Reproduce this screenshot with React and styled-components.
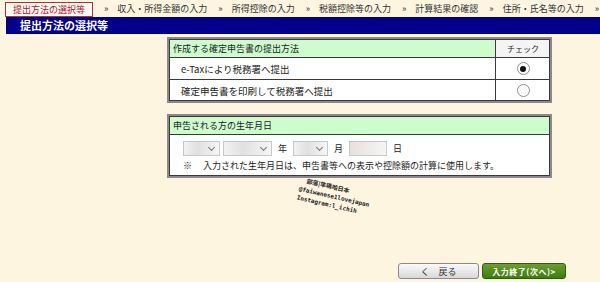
import React from "react";
import styled, { createGlobalStyle } from "styled-components";

const GlobalStyle = createGlobalStyle`
  html, body {
    margin: 0;
    padding: 0;
    background: #fdf5df;
  }
  body {
    font-family: "Noto Sans CJK JP", "Noto Sans", sans-serif;
    color: #222;
  }
`;

const steps = [
  "収入・所得金額の入力",
  "所得控除の入力",
  "税額控除等の入力",
  "計算結果の確認",
  "住所・氏名等の入力",
];

const App = () => {
  return (
    <Page>
      <GlobalStyle />
      <StepNav>
        <ActiveStep>提出方法の選択等</ActiveStep>
        {steps.map((s) => (
          <React.Fragment key={s}>
            <Sep>»</Sep>
            <Step>{s}</Step>
          </React.Fragment>
        ))}
        <Sep>»</Sep>
      </StepNav>
      <TitleBar>提出方法の選択等</TitleBar>

      <Content>
        <Table>
          <HeadRow>
            <Cell>作成する確定申告書の提出方法</Cell>
            <CheckCell head>チェック</CheckCell>
          </HeadRow>
          <Row>
            <Cell indent>e-Taxにより税務署へ提出</Cell>
            <CheckCell>
              <Radio checked />
            </CheckCell>
          </Row>
          <Row last>
            <Cell indent>確定申告書を印刷して税務署へ提出</Cell>
            <CheckCell>
              <Radio />
            </CheckCell>
          </Row>
        </Table>

        <Table>
          <HeadRow>
            <Cell>申告される方の生年月日</Cell>
          </HeadRow>
          <DateBlock>
            <DateLine>
              <Select width="37px" />
              <Select width="49px" />
              <Unit>年</Unit>
              <Select width="35px" />
              <Unit>月</Unit>
              <DayInput />
              <Unit>日</Unit>
            </DateLine>
            <Note>
              <span>※</span>
              入力された生年月日は、申告書等への表示や控除額の計算に使用します。
            </Note>
          </DateBlock>
        </Table>

        <Watermark>
          <div>部落|隼瑪哈日本</div>
          <div>@faiwanese1lovejapan</div>
          <div>Instagram:l_ichih</div>
        </Watermark>
      </Content>

      <Buttons>
        <BackButton>く　戻る</BackButton>
        <NextButton>入力終了(次へ)&gt;</NextButton>
      </Buttons>
    </Page>
  );
};

export default App;

const Page = styled.div`
  position: relative;
  width: 600px;
  height: 282px;
  overflow: hidden;
  background: #fdf5df;
`;

const StepNav = styled.div`
  display: flex;
  align-items: center;
  height: 17px;
  padding-left: 5px;
  font-size: 9px;
  white-space: nowrap;
`;

const ActiveStep = styled.div`
  border: 1px solid #b03040;
  background: #fffaf0;
  color: #b0102a;
  padding: 0 7px;
  height: 13px;
  line-height: 13px;
  margin-top: 1px;
`;

const Sep = styled.span`
  margin: 0 9px 0 11px;
  color: #333;
`;

const Step = styled.span`
  color: #333;
`;

const TitleBar = styled.div`
  margin-left: 6px;
  height: 17px;
  line-height: 17px;
  background: #00008c;
  color: #fff;
  font-weight: bold;
  font-size: 11px;
  padding-left: 14px;
`;

const Content = styled.div`
  position: relative;
  display: flex;
  flex-direction: column;
  gap: 11px;
  padding: 3px 0 0 167px;
`;

const Table = styled.div`
  width: 381px;
  border: 2px solid #8a8a8a;
  outline: 1px solid #3a3a3a;
  outline-offset: -3px;
  background: #fff;
  display: flex;
  flex-direction: column;
`;

const HeadRow = styled.div`
  display: flex;
  height: 18px;
  background: #cdfccd;
  border-bottom: 1px solid #3a3a3a;
  font-size: 9px;
`;

const Row = styled.div`
  display: flex;
  height: 21px;
  border-bottom: ${(p) => (p.last ? "none" : "1px solid #3a3a3a")};
  font-size: 9.5px;
`;

const Cell = styled.div`
  flex: 1;
  display: flex;
  align-items: center;
  padding-left: ${(p) => (p.indent ? "12px" : "4px")};
`;

const CheckCell = styled.div`
  width: 54px;
  display: flex;
  align-items: center;
  justify-content: center;
  border-left: 1px solid #3a3a3a;
  font-size: ${(p) => (p.head ? "8px" : "9px")};
  background: ${(p) => (p.head ? "#f4f4f4" : "#fff")};
`;

const Radio = styled.span`
  width: 11px;
  height: 11px;
  border-radius: 50%;
  border: 1px solid #8c8c8c;
  background: #fff;
  display: flex;
  align-items: center;
  justify-content: center;
  &::after {
    content: "";
    width: 6px;
    height: 6px;
    border-radius: 50%;
    background: ${(p) => (p.checked ? "#111" : "transparent")};
  }
`;

const DateBlock = styled.div`
  padding: 5px 0 4px 14px;
  display: flex;
  flex-direction: column;
  gap: 2px;
`;

const DateLine = styled.div`
  display: flex;
  align-items: center;
  gap: 3px;
  height: 17px;
  font-size: 9px;
`;

const Select = styled.div`
  position: relative;
  width: ${(p) => p.width};
  height: 15px;
  border: 1px solid #c8c8c8;
  background: linear-gradient(90deg, #f2f2f2, #e0e0e0 40%, #f6f6f6);
  box-sizing: border-box;
  &::after {
    content: "";
    position: absolute;
    right: 5px;
    top: 3px;
    width: 4px;
    height: 4px;
    border-right: 1px solid #777;
    border-bottom: 1px solid #777;
    transform: rotate(45deg);
  }
`;

const DayInput = styled.div`
  width: 38px;
  height: 15px;
  border: 1px solid #c8c8c8;
  background: linear-gradient(90deg, #e6e1dc, #f5f5f5);
  box-sizing: border-box;
`;

const Unit = styled.span`
  margin: 0 3px;
`;

const Note = styled.div`
  font-size: 9px;
  height: 13px;
  line-height: 13px;
  span {
    margin-right: 11px;
  }
`;

const Watermark = styled.div`
  position: absolute;
  left: 302px;
  top: 141px;
  transform: rotate(13deg);
  transform-origin: left top;
  font-family: "DejaVu Sans Mono", monospace;
  font-size: 6px;
  font-weight: bold;
  line-height: 9px;
  color: #222;
  div:first-child {
    font-family: "Noto Sans CJK JP", sans-serif;
    padding-left: 6px;
  }
`;

const Buttons = styled.div`
  position: absolute;
  right: 34px;
  bottom: 3px;
  display: flex;
  gap: 3px;
`;

const BaseButton = styled.div`
  height: 16px;
  line-height: 16px;
  border-radius: 3px;
  font-size: 9px;
  text-align: center;
  box-sizing: border-box;
`;

const BackButton = styled(BaseButton)`
  width: 81px;
  border: 1px solid #8a8a8a;
  background: linear-gradient(#fafafa, #d8d8d8);
  color: #333;
`;

const NextButton = styled(BaseButton)`
  width: 84px;
  border: 1px solid #2f5d10;
  background: linear-gradient(#6aa02c, #3f7a14);
  color: #fff;
  font-weight: bold;
  font-size: 8px;
  letter-spacing: 0.5px;
`;
